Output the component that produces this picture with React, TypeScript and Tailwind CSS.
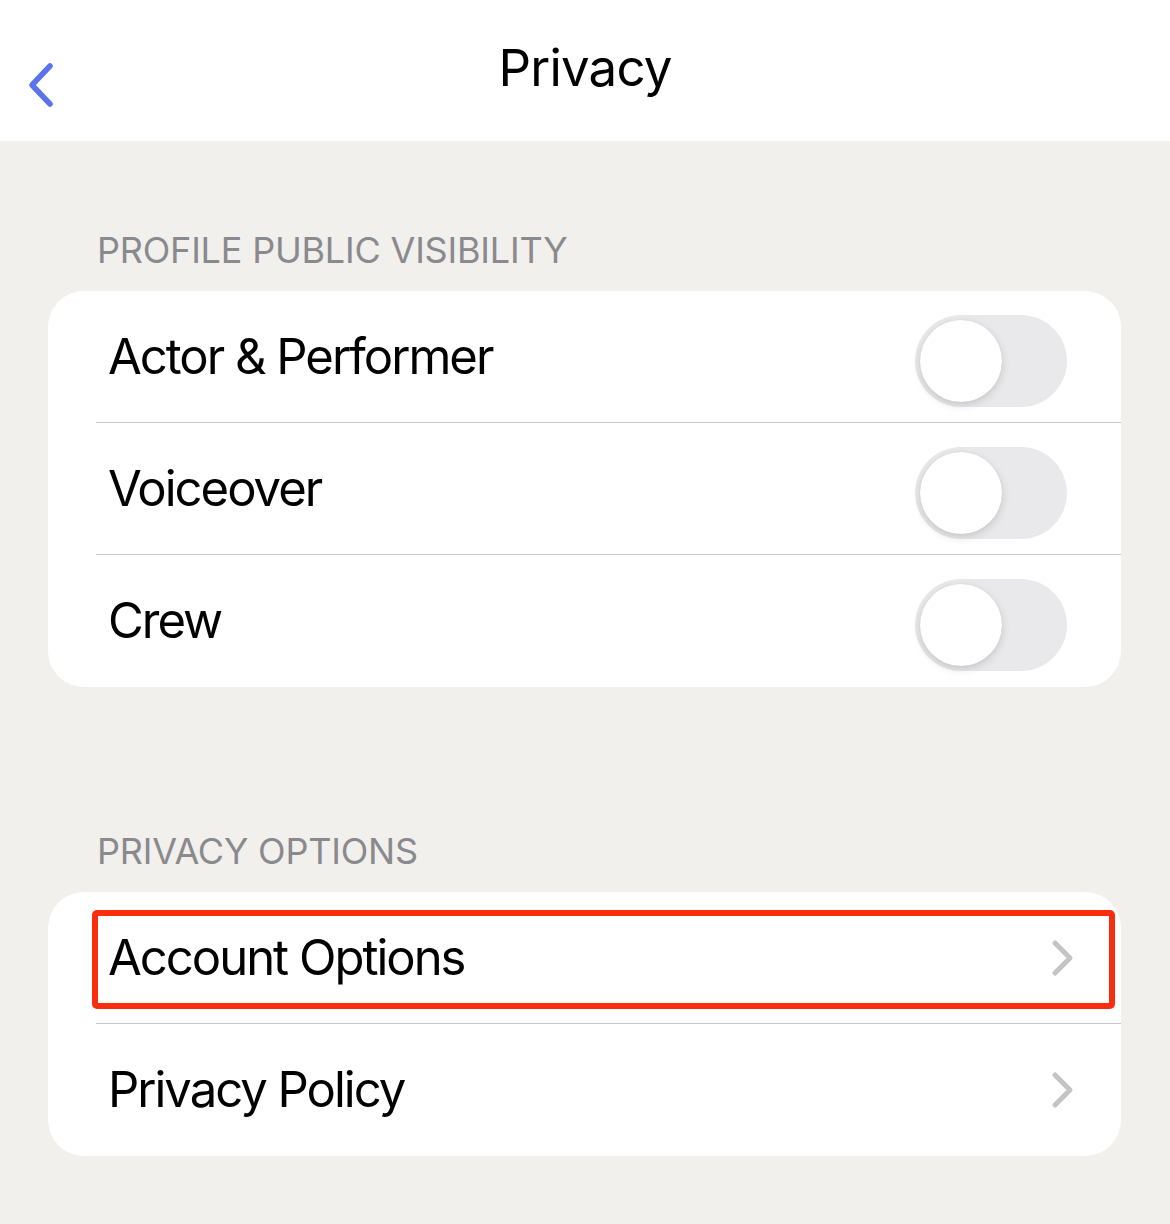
import React from 'react';

const font = { fontFamily: 'Inter, "Noto Sans", sans-serif' };

function Toggle() {
  return (
    <div className="mt-[9px] w-[152px] h-[92px] rounded-full bg-[#e9e9eb] p-[5px] flex items-center">
      <div className="w-[82px] h-[82px] rounded-full bg-white shadow-[0_3px_8px_rgba(0,0,0,0.15),0_0_1px_rgba(0,0,0,0.1)]" />
    </div>
  );
}

function Chevron() {
  return (
    <svg width="24" height="38" viewBox="0 0 24 38" fill="none">
      <path d="M4 4 L19 19 L4 34" stroke="#c4c4c7" strokeWidth="5" strokeLinecap="round" strokeLinejoin="round" />
    </svg>
  );
}

function Row({ label, right, divider, pr }: { label: string; right: React.ReactNode; divider?: boolean; pr: string }) {
  return (
    <div className="flex flex-col">
      <div className={`h-[131px] flex items-center justify-between pl-[60px] ${pr}`}>
        <span className="text-[49px] text-black tracking-[-2px]">{label}</span>
        {right}
      </div>
      {divider && <div className="ml-[48px] h-px bg-[#c8c7cc]" />}
    </div>
  );
}

export default function App() {
  const toggles = ['Actor & Performer', 'Voiceover', 'Crew'];
  return (
    <div className="w-[1170px] h-[1224px] bg-[#f1f0ec] flex flex-col" style={font}>
      <div className="h-[141px] bg-white flex items-center relative">
        <svg className="absolute left-[26px] top-[62px]" width="30" height="46" viewBox="0 0 30 46" fill="none">
          <path d="M24 4 L6 23 L24 42" stroke="#5b74ee" strokeWidth="5.5" strokeLinecap="round" strokeLinejoin="round" />
        </svg>
        <h1 className="w-full text-center text-[51px] text-black pb-[4px] tracking-[-0.8px]">Privacy</h1>
      </div>

      <div className="px-[48px] pr-[49px]">
        <div className="pt-[88px] pb-[20px] pl-[49px] text-[36px] text-[#8a8a8e] tracking-[-0.2px] leading-[42px]">
          PROFILE PUBLIC VISIBILITY
        </div>
        <div className="bg-white rounded-[36px] overflow-hidden pb-px">
          {toggles.map((t, i) => (
            <Row key={t} label={t} right={<Toggle />} divider={i < toggles.length - 1} pr="pr-[54px]" />
          ))}
        </div>

        <div className="pt-[143px] pb-[20px] pl-[49px] text-[36px] text-[#8a8a8e] tracking-[-0.2px] leading-[42px]">
          PRIVACY OPTIONS
        </div>
        <div className="bg-white rounded-[36px] overflow-hidden relative pb-px">
          <div className="absolute left-[44px] top-[18px] w-[1023px] h-[99px] border-[6px] border-[#fa2d0f] rounded-[5px]" />
          <Row label="Account Options" right={<Chevron />} divider pr="pr-[46px]" />
          <Row label="Privacy Policy" right={<Chevron />} pr="pr-[46px]" />
        </div>
      </div>
    </div>
  );
}
